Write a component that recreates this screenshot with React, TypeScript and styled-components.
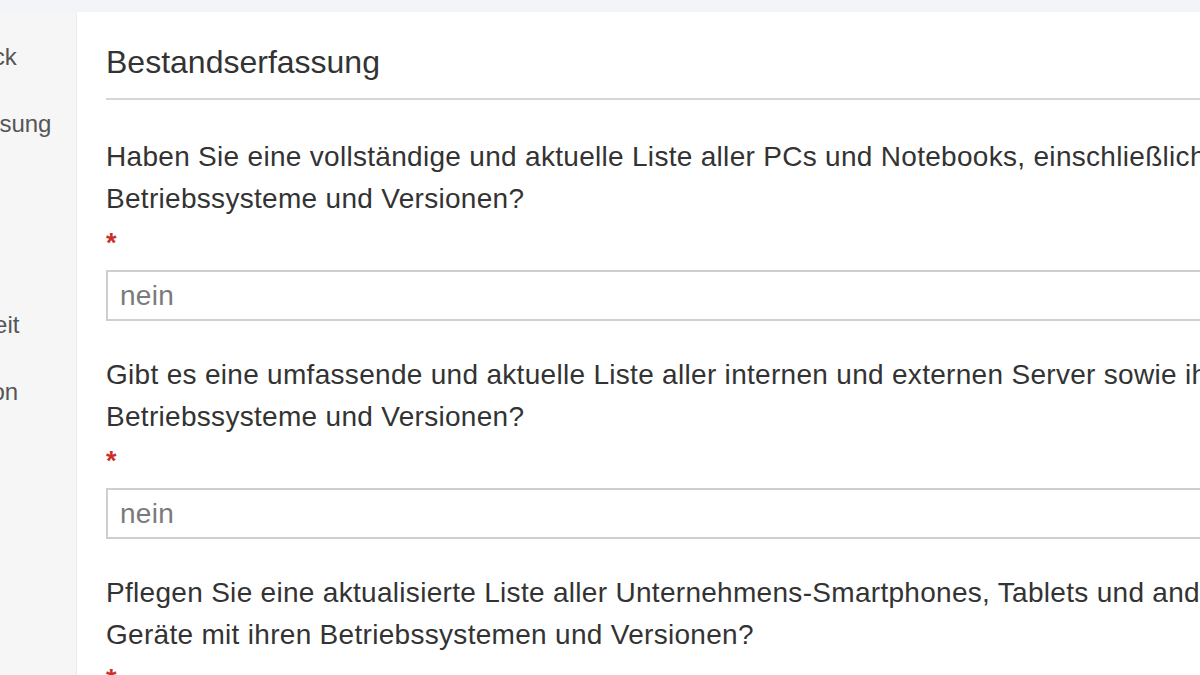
import React from "react";
import styled, { createGlobalStyle } from "styled-components";

const Global = createGlobalStyle`
  html, body {
    margin: 0;
    padding: 0;
    overflow: hidden;
    background: #f3f4f7;
    font-family: "Liberation Sans", Arial, sans-serif;
  }
`;

const Page = styled.div`
  display: flex;
  align-items: stretch;
  padding-top: 12px;
  min-height: 663px;
  width: 1500px;
`;

const Sidebar = styled.nav`
  flex: none;
  width: 76px;
  background: #f6f6f6;
  border-right: 1px solid #ececec;
  overflow: hidden;
`;

const NavList = styled.ul`
  list-style: none;
  margin: 0 0 0 -154px;
  padding: 30px 0 0 0;
  display: flex;
  flex-direction: column;
  gap: 37px;
`;

const NavItem = styled.li`
  font-size: 24px;
  line-height: 30px;
  color: #555;
  white-space: nowrap;
`;

const Panel = styled.main`
  flex: none;
  width: 1400px;
  background: #fff;
  padding: 32px 0 0 29px;
  box-sizing: border-box;
`;

const Content = styled.div`
  width: 1300px;
`;

const Heading = styled.h2`
  margin: 0;
  font-size: 32px;
  line-height: 36px;
  font-weight: 400;
  color: #333;
`;

const Divider = styled.hr`
  margin: 18px 0 0 0;
  border: none;
  border-top: 2px solid #d6d6d6;
`;

const Questions = styled.div`
  display: flex;
  flex-direction: column;
  gap: 33px;
  padding-top: 36px;
`;

const Field = styled.div`
  display: flex;
  flex-direction: column;
`;

const Question = styled.label`
  font-size: 28px;
  line-height: 42px;
  letter-spacing: 0.3px;
  color: #333;
`;

const Required = styled.span`
  display: block;
  padding-top: 4px;
  font-size: 27px;
  line-height: 38px;
  color: #c9302c;
  font-weight: 700;
`;

const Input = styled.input`
  margin-top: 8px;
  height: 51px;
  box-sizing: border-box;
  border: 2px solid #cfcfcf;
  padding: 0 12px;
  font-family: "Liberation Sans", Arial, sans-serif;
  font-size: 28px;
  letter-spacing: 0.3px;
  color: #333;
  background: #fff;
  outline: none;
  &::placeholder {
    color: #7a7a7a;
  }
`;

const navItems = [
  "Projektüberblick",
  "Bestandserfassung",
  "Netzwerk",
  "Backup",
  "Serversicherheit",
  "Softwareversion",
];

const questions = [
  "Haben Sie eine vollständige und aktuelle Liste aller PCs und Notebooks, einschließlich ihrer Betriebssysteme und Versionen?",
  "Gibt es eine umfassende und aktuelle Liste aller internen und externen Server sowie ihrer Betriebssysteme und Versionen?",
  "Pflegen Sie eine aktualisierte Liste aller Unternehmens-Smartphones, Tablets und anderer mobiler Geräte mit ihren Betriebssystemen und Versionen?",
];

export default function App() {
  return (
    <>
      <Global />
      <Page>
        <Sidebar>
          <NavList>
            {navItems.map((n) => (
              <NavItem key={n}>{n}</NavItem>
            ))}
          </NavList>
        </Sidebar>
        <Panel>
          <Content>
            <Heading>Bestandserfassung</Heading>
            <Divider />
            <Questions>
              {questions.map((q, i) => (
                <Field key={i}>
                  <Question>{q}</Question>
                  <Required>*</Required>
                  <Input placeholder="nein" />
                </Field>
              ))}
            </Questions>
          </Content>
        </Panel>
      </Page>
    </>
  );
}
